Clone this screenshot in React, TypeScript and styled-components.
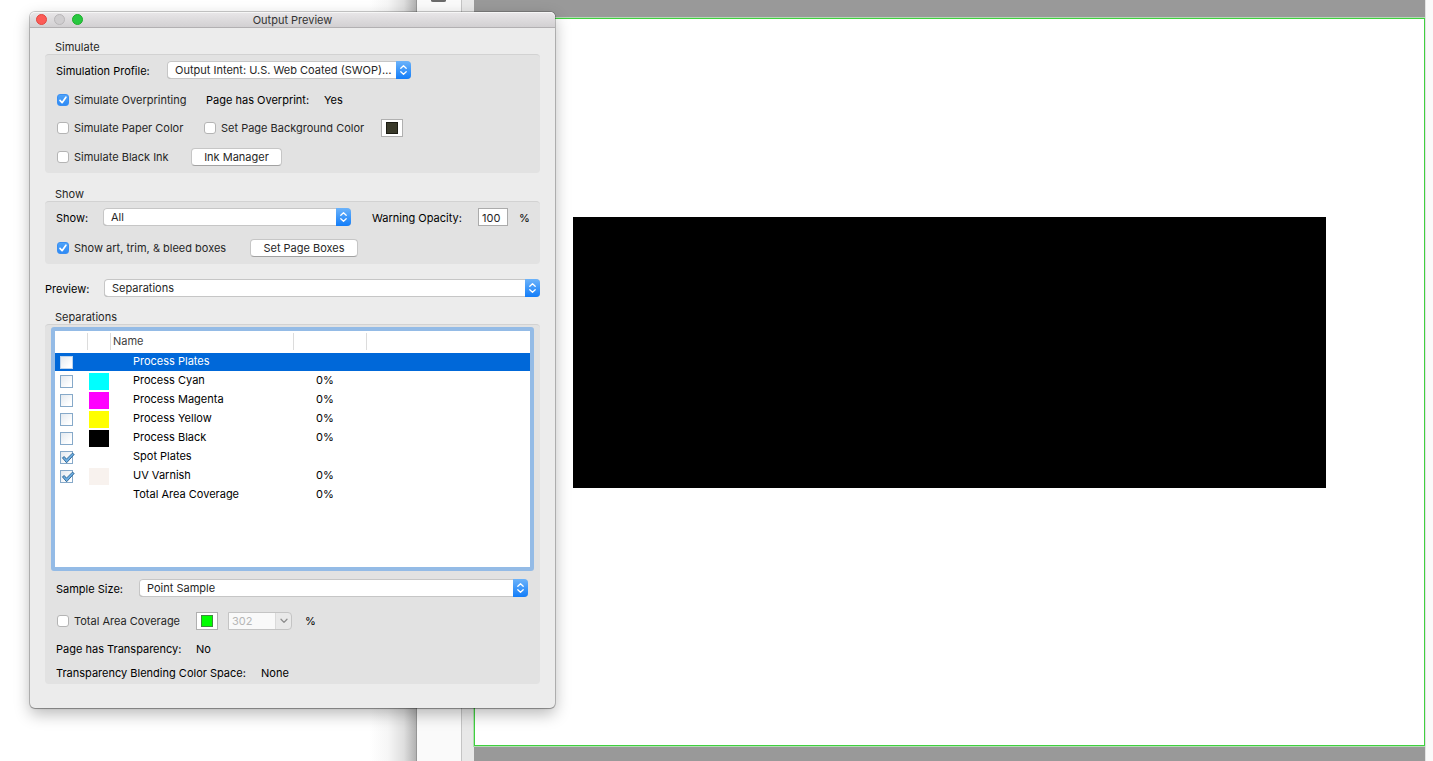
import React, { useState } from "react";
import styled, { createGlobalStyle, css } from "styled-components";

const Global = createGlobalStyle`
  * { box-sizing: border-box; }
  body {
    margin: 0;
    background: #fff;
    color: #000;
    font: 11px/14px Inter, "Liberation Sans", sans-serif;
    overflow: hidden;
  }
  input, select, button { font: inherit; color: inherit; margin: 0; }
`;

/* ---------- document window ---------- */

const Desktop = styled.div`
  position: relative;
  display: flex;
  min-height: 100vh;
`;

const Wallpaper = styled.div`
  flex: 0 0 416px;
  background: linear-gradient(
    to right,
    #fff calc(100% - 46px),
    #f6f6f6 calc(100% - 28px),
    #dedede calc(100% - 12px),
    #b2b2b2 100%
  );
`;

const ToolStrip = styled.div`
  flex: 0 0 46px;
  padding-left: 14px;
  background: #fafafa;
  border-left: 1px solid #969696;
  border-right: 1px solid #c4c4c4;
`;

const Gutter = styled.div`
  flex: 0 0 12px;
  background: #e8e8e8;
`;

const Pasteboard = styled.main`
  flex: 1;
  display: flex;
  flex-direction: column;
  background: #999;
  padding: 17px 0 15px;
`;

const Page = styled.div`
  flex: 1;
  padding: 198px 98px 0;
  background: #fff;
  border: 1px solid #3fd03f;
  outline: 1px solid #b4dcb4;
  outline-offset: 0;
  margin-top: 1px;
`;

const BlackPlate = styled.div`
  height: 271px;
  background: #000;
`;

const RightEdge = styled.div`
  flex: 0 0 8px;
  background: #fafafa;
  border-left: 1px solid #e2e2e2;
`;

/* ---------- floating panel ---------- */

const Panel = styled.section`
  position: absolute;
  top: 12px;
  left: 30px;
  width: 525px;
  background: #ececec;
  border-radius: 5px;
  box-shadow: 0 0 0 1px rgba(0, 0, 0, 0.2), 0 1px 1px rgba(0, 0, 0, 0.2),
    0 6px 16px rgba(0, 0, 0, 0.28);
`;

const TitleBar = styled.header`
  display: grid;
  grid-template-columns: 1fr auto 1fr;
  align-items: center;
  height: 16px;
  padding: 0 6px;
  background: linear-gradient(#e9e7e9, #d2d0d2);
  border-bottom: 1px solid #b2b0b2;
  border-radius: 5px 5px 0 0;
  box-shadow: inset 0 1px 0 #f6f6f6;
`;

const Title = styled.h1`
  margin: 0;
  font-size: 11px;
  font-weight: 400;
  line-height: 14px;
  color: #333;
`;

const Lights = styled.div`
  display: flex;
  gap: 7px;
`;

const Light = styled.button<{ $fill: string; $rim: string }>`
  width: 11px;
  height: 11px;
  padding: 0;
  border: 1px solid ${(p) => p.$rim};
  border-radius: 50%;
  background: ${(p) => p.$fill};
`;

const Body = styled.div`
  padding: 12px 15px 24px;
`;

const Section = styled.section<{ $gap?: number }>`
  margin-top: ${(p) => p.$gap ?? 0}px;
`;

const SectionTitle = styled.h2`
  margin: 0;
  padding-left: 10px;
  font-size: 11px;
  font-weight: 400;
  line-height: 14px;
  color: #262626;
`;

const Group = styled.div`
  padding: 6px 11px 7px;
  background: #e2e2e2;
  border-top: 1px solid #d2d2d2;
  border-radius: 4px;
`;

const SeparationsGroup = styled(Group)`
  padding: 2px 6px;
`;

const Row = styled.div<{ $top?: number; $inset?: number }>`
  display: flex;
  align-items: center;
  height: 18px;
  margin-top: ${(p) => p.$top ?? 0}px;
  padding: 0 ${(p) => p.$inset ?? 0}px;
`;

const FieldLabel = styled.label<{ $w: number }>`
  flex: 0 0 ${(p) => p.$w}px;
  padding-top: 1px;
  white-space: nowrap;
`;

const Text = styled.span<{ $w?: number }>`
  ${(p) => p.$w && css`flex: 0 0 ${p.$w}px;`}
  white-space: nowrap;
`;

const Unit = styled.span<{ $gap: number }>`
  padding-left: ${(p) => p.$gap}px;
`;

const SelectWrap = styled.span<{ $w?: number }>`
  display: flex;
  flex: ${(p) => (p.$w ? `0 0 ${p.$w}px` : "1")};
  height: 18px;
  border-radius: 4px;
  background: #fff;
  box-shadow: inset 0 0 0 1px #c6c6c6, inset 0 -1px 0 #a2a2a2;
  overflow: hidden;
`;

const NativeSelect = styled.select`
  appearance: none;
  flex: 1;
  min-width: 0;
  height: 18px;
  padding: 0 0 0 8px;
  border: 0;
  background: transparent;
  color: #262626;
  line-height: 18px;
  outline: none;
`;

const SelectCap = styled.span`
  flex: 0 0 15px;
  display: grid;
  place-items: center;
  background: linear-gradient(#6cb3fa, #127df9);
  pointer-events: none;
`;

const PushButton = styled.button<{ $w: number }>`
  width: ${(p) => p.$w}px;
  height: 18px;
  padding: 0;
  border: 1px solid #c6c6c6;
  border-bottom-color: #a2a2a2;
  border-radius: 4px;
  background: #fff;
  color: #262626;
  line-height: 16px;
`;

const CheckLabel = styled.label<{ $w: number }>`
  flex: 0 0 ${(p) => p.$w}px;
  display: flex;
  align-items: center;
  gap: 5px;
  padding-left: 1px;
  color: #262626;
  white-space: nowrap;
`;

const CheckBox = styled.span`
  position: relative;
  display: flex;
  svg {
    position: absolute;
    inset: 0;
    pointer-events: none;
  }
`;

const CheckInput = styled.input`
  appearance: none;
  width: 12px;
  height: 12px;
  border: 1px solid #b4b4b4;
  border-radius: 3px;
  background: #fff;
  &:checked {
    border-color: #3a8ff2;
    background: linear-gradient(#4ea2f8, #2f8bf5);
  }
`;

const ColorWell = styled.button`
  display: grid;
  place-items: center;
  width: 22px;
  height: 18px;
  padding: 0;
  border: 1px solid #b0b0b0;
  background: #fff;
`;

const ColorChip = styled.span<{ $color: string; $rim: string }>`
  width: 12px;
  height: 12px;
  border: 1px solid ${(p) => p.$rim};
  background: ${(p) => p.$color};
`;

const OpacityInput = styled.input`
  width: 30px;
  height: 18px;
  margin-right: 11px;
  padding: 2px 0 0 3px;
  border: 1px solid #ababab;
  background: #fff;
  color: #262626;
`;

const Combo = styled.span`
  display: flex;
  width: 64px;
  height: 18px;
  margin-left: 10px;
  border: 1px solid #c4c4c4;
  border-radius: 0 4px 4px 0;
  background: #e9e9e9;
`;

const ComboInput = styled.input`
  width: 47px;
  padding: 0 0 0 3px;
  border: 0;
  border-right: 1px solid #dadada;
  background: #f9f9f9;
  color: #b6b6b6;
`;

const ComboArrow = styled.span`
  flex: 1;
  display: grid;
  place-items: center;
`;

/* ---------- separations list ---------- */

const ListFrame = styled.div`
  height: 244px;
  border: 4px solid #94bbe6;
  border-radius: 3px;
  background: #fff;
`;

const Table = styled.table`
  width: 100%;
  table-layout: fixed;
  border-collapse: collapse;
  text-align: left;
`;

const HeadCell = styled.th<{ $w?: number; $rule?: boolean }>`
  width: ${(p) => (p.$w ? `${p.$w}px` : "auto")};
  height: 22px;
  padding: 0 0 2px 2px;
  font-weight: 400;
  color: #404040;
  background: ${(p) =>
    p.$rule ? "linear-gradient(#dcdcdc, #dcdcdc) right 2px / 1px 17px no-repeat" : "none"};
`;

const PlateRow = styled.tr<{ $selected: boolean }>`
  height: 19px;
  background: ${(p) =>
    p.$selected ? "linear-gradient(#0068d9, #0068d9) 0 0 / 100% 18px no-repeat" : "transparent"};
  color: ${(p) => (p.$selected ? "#fff" : "#000")};
`;

const PlateCell = styled.td<{ $pad?: number }>`
  height: 19px;
  padding: 0 0 1px ${(p) => p.$pad ?? 0}px;
  vertical-align: middle;
`;

const PlateText = styled.td`
  height: 19px;
  padding: 0 0 3px 22px;
  line-height: 16px;
  white-space: nowrap;
`;

const PlateCheck = styled.span`
  position: relative;
  display: block;
  width: 13px;
  height: 13px;
  margin-top: 1px;
  svg {
    position: absolute;
    top: 0;
    left: 0;
    pointer-events: none;
  }
`;

const PlateInput = styled.input<{ $selected: boolean }>`
  appearance: none;
  display: block;
  width: 13px;
  height: 13px;
  border: 1px solid ${(p) => (p.$selected ? "#bcd3ec" : "#86a9c9")};
  background: linear-gradient(135deg, #e3e9ef, #fff 80%);
`;

const Swatch = styled.span<{ $color: string }>`
  display: block;
  width: 20px;
  height: 17px;
  margin-top: 1px;
  background: ${(p) => p.$color};
`;

function Popup({ id, value, width }: { id: string; value: string; width?: number }) {
  return (
    <SelectWrap $w={width}>
      <NativeSelect id={id} defaultValue={value}>
        <option>{value}</option>
      </NativeSelect>
      <SelectCap>
        <svg width="9" height="12" viewBox="0 0 9 12" fill="none" stroke="#fff" strokeWidth="1.3" strokeLinecap="round" strokeLinejoin="round">
          <path d="M1.8 4.3 4.5 1.8 7.2 4.3M1.8 7.7 4.5 10.2 7.2 7.7" />
        </svg>
      </SelectCap>
    </SelectWrap>
  );
}

function Check({ label, width, on = false }: { label: string; width: number; on?: boolean }) {
  const [checked, setChecked] = useState(on);
  return (
    <CheckLabel $w={width}>
      <CheckBox>
        <CheckInput type="checkbox" checked={checked} onChange={() => setChecked(!checked)} />
        {checked && (
          <svg width="12" height="12" viewBox="0 0 12 12" fill="none" stroke="#fff" strokeWidth="1.7" strokeLinecap="round" strokeLinejoin="round">
            <path d="M3 6.4 5.1 8.7 8.9 3.2" />
          </svg>
        )}
      </CheckBox>
      {label}
    </CheckLabel>
  );
}

type Plate = { name: string; color?: string; value?: string; on?: boolean; box?: boolean };

const plates: Plate[] = [
  { name: "Process Plates", box: true },
  { name: "Process Cyan", color: "#00ffff", value: "0%", box: true },
  { name: "Process Magenta", color: "#ff00ff", value: "0%", box: true },
  { name: "Process Yellow", color: "#ffff00", value: "0%", box: true },
  { name: "Process Black", color: "#000000", value: "0%", box: true },
  { name: "Spot Plates", box: true, on: true },
  { name: "UV Varnish", color: "#f8f2ee", value: "0%", box: true, on: true },
  { name: "Total Area Coverage", value: "0%" },
];

function PlateBox({ plate, selected }: { plate: Plate; selected: boolean }) {
  const [checked, setChecked] = useState(!!plate.on);
  return (
    <PlateCheck>
      <PlateInput
        type="checkbox"
        aria-label={plate.name}
        $selected={selected}
        checked={checked}
        onChange={() => setChecked(!checked)}
      />
      {checked && (
        <svg width="15" height="14" viewBox="0 0 15 14">
          <path d="M2.4 6.8 4.3 5.6 6.4 8.2 12.4 2.2 14.2 3.4 6.6 11.8Z" fill="#6fb0e4" stroke="#28608f" strokeWidth="0.9" strokeLinejoin="round" />
        </svg>
      )}
    </PlateCheck>
  );
}

export default function App() {
  return (
    <>
      <Global />
      <Desktop>
        <Wallpaper />
        <ToolStrip>
          <svg width="15" height="3" viewBox="0 0 15 3" display="block">
            <path d="M0 0H15V.5Q15 2 13 2H2Q0 2 0 .5Z" fill="#6b6b6b" />
          </svg>
        </ToolStrip>
        <Gutter />
        <Pasteboard>
          <Page>
            <BlackPlate />
          </Page>
        </Pasteboard>
        <RightEdge />

        <Panel>
          <TitleBar>
            <Lights>
              <Light aria-label="Close" $fill="#fc5b57" $rim="#e2463f" />
              <Light aria-label="Minimize" $fill="#d0ced0" $rim="#b9b7b9" />
              <Light aria-label="Zoom" $fill="#28c840" $rim="#1dad2b" />
            </Lights>
            <Title>Output Preview</Title>
          </TitleBar>
          <Body>
            <Section>
              <SectionTitle>Simulate</SectionTitle>
              <Group>
                <Row>
                  <FieldLabel $w={111} htmlFor="profile">Simulation Profile:</FieldLabel>
                  <Popup id="profile" value="Output Intent: U.S. Web Coated (SWOP)…" width={244} />
                </Row>
                <Row $top={12}>
                  <Check label="Simulate Overprinting" width={150} on />
                  <Text $w={118}>Page has Overprint:</Text>
                  <Text>Yes</Text>
                </Row>
                <Row $top={10}>
                  <Check label="Simulate Paper Color" width={147} />
                  <Check label="Set Page Background Color" width={178} />
                  <ColorWell aria-label="Page background color">
                    <ColorChip $color="#3a3a2a" $rim="#1c1c14" />
                  </ColorWell>
                </Row>
                <Row $top={11}>
                  <Check label="Simulate Black Ink" width={135} />
                  <PushButton $w={91}>Ink Manager</PushButton>
                </Row>
              </Group>
            </Section>

            <Section $gap={14}>
              <SectionTitle>Show</SectionTitle>
              <Group>
                <Row>
                  <FieldLabel $w={47} htmlFor="show">Show:</FieldLabel>
                  <Popup id="show" value="All" width={269 - 21} />
                  <Text $w={21} />
                  <FieldLabel $w={106} htmlFor="opacity">Warning Opacity:</FieldLabel>
                  <OpacityInput id="opacity" defaultValue="100" />
                  <FieldLabel as="span" $w={10}>%</FieldLabel>
                </Row>
                <Row $top={13}>
                  <Check label="Show art, trim, & bleed boxes" width={194} on />
                  <PushButton $w={108}>Set Page Boxes</PushButton>
                </Row>
              </Group>
            </Section>

            <Row $top={15}>
              <FieldLabel $w={59} htmlFor="preview">Preview:</FieldLabel>
              <Popup id="preview" value="Separations" />
            </Row>

            <Section $gap={13}>
              <SectionTitle>Separations</SectionTitle>
              <SeparationsGroup>
                <ListFrame>
                  <Table>
                    <thead>
                      <tr>
                        <HeadCell $w={33} $rule />
                        <HeadCell $w={23} $rule />
                        <HeadCell $w={183} $rule>Name</HeadCell>
                        <HeadCell $w={73} $rule />
                        <HeadCell />
                      </tr>
                    </thead>
                    <tbody>
                      {plates.map((p, i) => (
                        <PlateRow key={p.name} $selected={i === 0}>
                          <PlateCell $pad={5}>{p.box && <PlateBox plate={p} selected={i === 0} />}</PlateCell>
                          <PlateCell $pad={1}>{p.color && <Swatch $color={p.color} />}</PlateCell>
                          <PlateText>{p.name}</PlateText>
                          <PlateText>{p.value}</PlateText>
                          <PlateCell />
                        </PlateRow>
                      ))}
                    </tbody>
                  </Table>
                </ListFrame>
                <Row $top={8} $inset={5}>
                  <FieldLabel $w={83} htmlFor="sample">Sample Size:</FieldLabel>
                  <Popup id="sample" value="Point Sample" width={389} />
                </Row>
                <Row $top={15} $inset={5}>
                  <Check label="Total Area Coverage" width={140} />
                  <ColorWell aria-label="Coverage color">
                    <ColorChip $color="#00ff00" $rim="#3c8c3c" />
                  </ColorWell>
                  <Combo>
                    <ComboInput aria-label="Coverage limit" defaultValue="302" disabled />
                    <ComboArrow>
                      <svg width="8" height="6" viewBox="0 0 8 6" fill="none" stroke="#8e8e8e" strokeWidth="1.3" strokeLinecap="round" strokeLinejoin="round">
                        <path d="M1 1.2 4 4.4 7 1.2" />
                      </svg>
                    </ComboArrow>
                  </Combo>
                  <Unit $gap={13}>%</Unit>
                </Row>
                <Row $top={10} $inset={5}>
                  <Text $w={140}>Page has Transparency:</Text>
                  <Text>No</Text>
                </Row>
                <Row $top={6} $inset={5}>
                  <Text $w={205}>Transparency Blending Color Space:</Text>
                  <Text>None</Text>
                </Row>
              </SeparationsGroup>
            </Section>
          </Body>
        </Panel>
      </Desktop>
    </>
  );
}
